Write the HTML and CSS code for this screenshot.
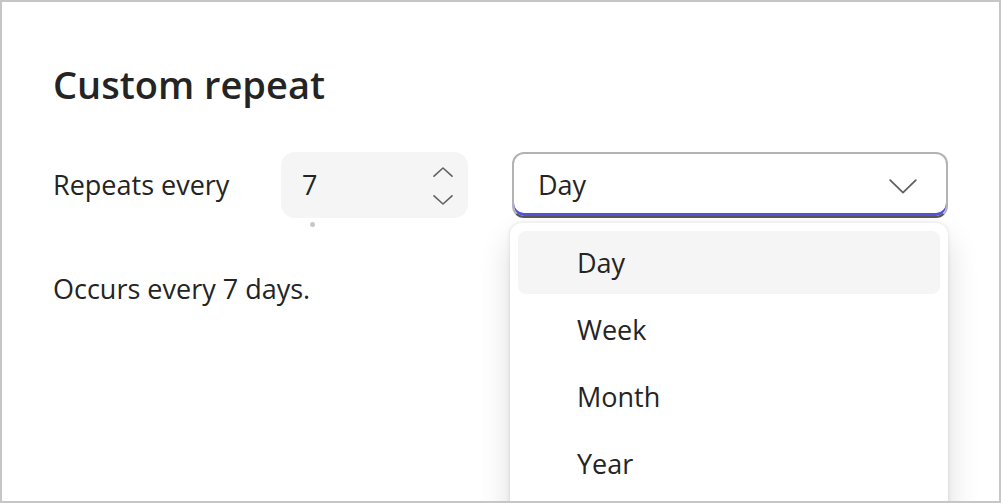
FILE: index.html
```html
<!DOCTYPE html>
<html lang="en">
<head>
<meta charset="utf-8">
<title>Custom repeat</title>
<link rel="stylesheet" href="styles.css">
</head>
<body>
<div class="frame">
  <h1 class="title">Custom repeat</h1>
  <div class="row">
    <span class="label">Repeats every</span>
    <div class="spin">
      <span class="spin-value">7</span>
      <span class="spin-buttons">
        <svg class="spin-icon" width="20" height="10" viewBox="0 0 20 10"><path d="M1 9.2 L10 1 L19 9.2" fill="none" stroke="#616161" stroke-width="1.6" stroke-linecap="round" stroke-linejoin="round"/></svg>
        <svg class="spin-icon" width="20" height="10" viewBox="0 0 20 10"><path d="M1 0.8 L10 9 L19 0.8" fill="none" stroke="#616161" stroke-width="1.6" stroke-linecap="round" stroke-linejoin="round"/></svg>
      </span>
    </div>
    <div class="dropdown">
      <span class="dropdown-value">Day</span>
      <svg class="dropdown-icon" width="28" height="15" viewBox="0 0 28 15"><path d="M1.2 1.2 L14 13.6 L26.8 1.2" fill="none" stroke="#616161" stroke-width="1.8" stroke-linecap="round" stroke-linejoin="round"/></svg>
      <div class="listbox">
        <div class="option selected">Day</div>
        <div class="option">Week</div>
        <div class="option">Month</div>
        <div class="option">Year</div>
      </div>
    </div>
  </div>
  <p class="summary">Occurs every 7 days.</p>
</div>
</body>
</html>
```

FILE: styles.css
```css
html, body {
  margin: 0;
  padding: 0;
  background: #ffffff;
}

body {
  font-family: "Open Sans", "Noto Sans", sans-serif;
  color: #242424;
}

.frame {
  box-sizing: border-box;
  width: 1001px;
  height: 503px;
  border: 2px solid #c6c6c6;
  overflow: hidden;
  padding: 56px 0 0 51px;
}

.title {
  margin: 0;
  font-size: 38px;
  line-height: 52px;
  font-weight: 600;
  color: #242424;
}

.row {
  display: flex;
  align-items: center;
  margin-top: 42px;
  height: 66px;
}

.label {
  width: 228px;
  font-size: 27px;
  line-height: 66px;
}

.spin {
  position: relative;
  box-sizing: border-box;
  width: 187px;
  height: 66px;
  background: #f5f5f5;
  border-radius: 14px;
  display: flex;
  align-items: center;
  justify-content: space-between;
  padding: 0 15px 0 21px;
}

.spin::after {
  content: "";
  position: absolute;
  left: 29px;
  bottom: -9px;
  width: 5px;
  height: 5px;
  border-radius: 50%;
  background: #c8c8c8;
}

.spin-value {
  font-size: 27px;
  line-height: 66px;
}

.spin-buttons {
  display: flex;
  flex-direction: column;
  align-items: center;
  gap: 18px;
  padding-top: 2px;
}

.spin-icon {
  display: block;
}

.dropdown {
  position: relative;
  box-sizing: border-box;
  width: 436px;
  height: 66px;
  margin-left: 44px;
  border: 2px solid #b3b3b3;
  border-bottom-color: #575757;
  border-radius: 12px;
  box-shadow: inset 0 -3px 0 0 #5552d6;
  display: flex;
  align-items: center;
  justify-content: space-between;
  padding: 0 29px 0 24px;
}

.dropdown-value {
  font-size: 27px;
  line-height: 62px;
}

.dropdown-icon {
  display: block;
  margin-top: 2px;
}

.listbox {
  position: absolute;
  left: -4px;
  top: 69px;
  width: 438px;
  box-sizing: border-box;
  padding: 8px 8px 40px;
  background: #ffffff;
  border-radius: 12px;
  box-shadow: 0 0 4px rgba(0, 0, 0, 0.12), 0 16px 32px rgba(0, 0, 0, 0.14);
  display: flex;
  flex-direction: column;
  gap: 4px;
}

.option {
  height: 63px;
  line-height: 63px;
  padding-left: 59px;
  font-size: 27px;
  border-radius: 8px;
}

.option.selected {
  background: #f5f5f5;
}

.summary {
  margin: 53px 0 0;
  font-size: 27px;
  line-height: 36px;
}
```
